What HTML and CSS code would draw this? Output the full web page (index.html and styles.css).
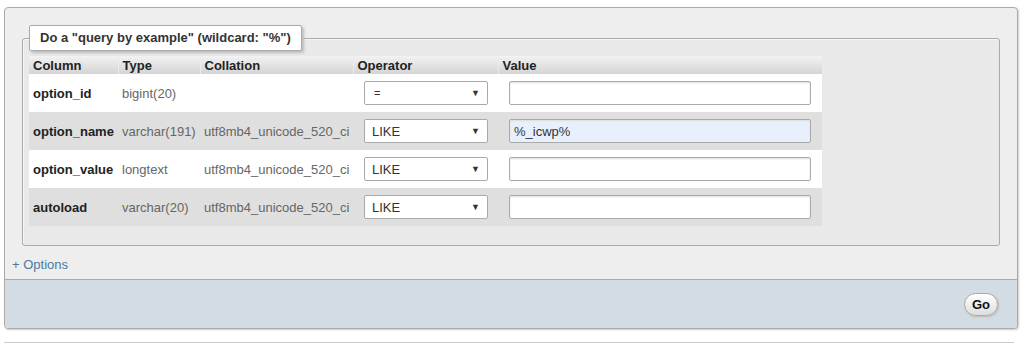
FILE: index.html
```html
<html>
<head>
<link rel="stylesheet" href="styles.css">
</head>
<body>
<div class="box">
	<div class="box-main">
		<fieldset class="search">
			<legend>Do a "query by example" (wildcard: "%")</legend>
			<table class="fields">
				<colgroup>
					<col class="c-name">
					<col class="c-type">
					<col class="c-coll">
					<col class="c-op">
					<col class="c-val">
				</colgroup>
				<thead>
					<tr>
						<th>Column</th>
						<th>Type</th>
						<th>Collation</th>
						<th>Operator</th>
						<th>Value</th>
					</tr>
				</thead>
				<tbody>
					<tr class="odd">
						<td class="name">option_id</td>
						<td class="type">bigint(20)</td>
						<td class="type"></td>
						<td><div class="sel"><span class="eq">=</span><span class="arrow">&#9660;</span></div></td>
						<td><input class="val" value=""></td>
					</tr>
					<tr class="even">
						<td class="name">option_name</td>
						<td class="type">varchar(191)</td>
						<td class="type">utf8mb4_unicode_520_ci</td>
						<td><div class="sel"><span>LIKE</span><span class="arrow">&#9660;</span></div></td>
						<td><input class="val filled" value="%_icwp%"></td>
					</tr>
					<tr class="odd">
						<td class="name">option_value</td>
						<td class="type">longtext</td>
						<td class="type">utf8mb4_unicode_520_ci</td>
						<td><div class="sel"><span>LIKE</span><span class="arrow">&#9660;</span></div></td>
						<td><input class="val" value=""></td>
					</tr>
					<tr class="even">
						<td class="name">autoload</td>
						<td class="type">varchar(20)</td>
						<td class="type">utf8mb4_unicode_520_ci</td>
						<td><div class="sel"><span>LIKE</span><span class="arrow">&#9660;</span></div></td>
						<td><input class="val" value=""></td>
					</tr>
				</tbody>
			</table>
		</fieldset>
		<div class="options"><a href="#">+ Options</a></div>
	</div>
	<div class="footer">
		<button class="go">Go</button>
	</div>
</div>
<div class="next"></div>
</body>
</html>
```

FILE: styles.css
```css
body {
	margin: 0;
	background: #fff;
	font-family: "Liberation Sans", Arial, sans-serif;
	font-size: 13px;
	color: #333;
}
.box {
	margin: 7px 6px 0 4px;
	border: 1px solid #aaa;
	border-radius: 4px;
	background: #eee;
	box-shadow: 1px 1px 2px #ccc;
	overflow: hidden;
}
.box-main {
	padding: 17px 0 0 0;
}
fieldset.search {
	margin: 0 17px;
	padding: 0 6px 19px 6px;
	border: 1px solid #aaa;
	border-radius: 3px;
	background: #e9e9e9;
	box-shadow: inset 1px 1px 0 #f6f6f6;
}
fieldset.search legend {
	margin: 0;
	padding: 0 10px;
	height: 24px;
	line-height: 24px;
	background: #fff;
	border: 1px solid #aaa;
	border-radius: 2px;
	box-shadow: 2px 2px 3px #bbb;
	font-weight: bold;
	font-size: 13px;
	color: #333;
}
.fields {
	margin-top: 5px;
	width: 793px;
	table-layout: fixed;
	border-collapse: collapse;
	font-family: "Liberation Sans", Arial, sans-serif;
	font-size: 13px;
	color: #333;
}
.c-name { width: 89px; }
.c-type { width: 82px; }
.c-coll { width: 153px; }
.c-op { width: 145px; }
.c-val { width: 324px; }
.fields th {
	height: 18px;
	padding: 0 4px;
	text-align: left;
	font-weight: bold;
	color: #222;
	background: linear-gradient(#f2f2f2, #d4d4d4);
	border-right: 1px solid #ececec;
}
.fields td {
	height: 38px;
	padding: 0 4px;
	white-space: nowrap;
	overflow: hidden;
}
.fields tr.odd td {
	background: #fff;
}
.fields tr.even td {
	background: #dfdfdf;
}
.fields td.name {
	font-weight: bold;
	color: #222;
}
.fields td.type {
	color: #666;
}
.sel {
	margin-left: 7px;
	width: 108px;
	height: 22px;
	padding: 0 7px 0 7px;
	border: 1px solid #aaa;
	border-radius: 2px;
	background: #fff;
	display: flex;
	align-items: center;
	justify-content: space-between;
	color: #333;
}
.sel .eq {
	font-size: 11px;
	padding-left: 2px;
}
.sel .arrow {
	font-size: 9px;
	color: #333;
}
input.val {
	margin-left: 7px;
	width: 302px;
	height: 24px;
	box-sizing: border-box;
	padding: 0 4px;
	border: 1px solid #aaa;
	border-radius: 2px;
	box-shadow: inset 0 1px 2px #ddd;
	font-family: "Liberation Sans", Arial, sans-serif;
	font-size: 13px;
	color: #333;
	background: #fff;
}
input.filled {
	background: #e8f0fe;
}
.options {
	padding: 11px 7px 6px 7px;
	line-height: 16px;
}
.options a {
	color: #4e78a0;
	text-decoration: none;
}
.footer {
	border-top: 1px solid #aaa;
	background: #d3dce3;
	height: 48px;
	display: flex;
	align-items: center;
	justify-content: flex-end;
	padding-right: 19px;
}
.go {
	height: 23px;
	width: 34px;
	padding: 0;
	border: 1px solid #aaa;
	border-radius: 12px;
	background: linear-gradient(#fff, #ddd);
	box-shadow: 1px 1px 2px #bbb;
	font-family: "Liberation Sans", Arial, sans-serif;
	font-size: 13px;
	font-weight: bold;
	color: #111;
}
.next {
	margin: 13px 10px 0 4px;
	height: 0;
	border-top: 1px solid #ccc;
}
```
